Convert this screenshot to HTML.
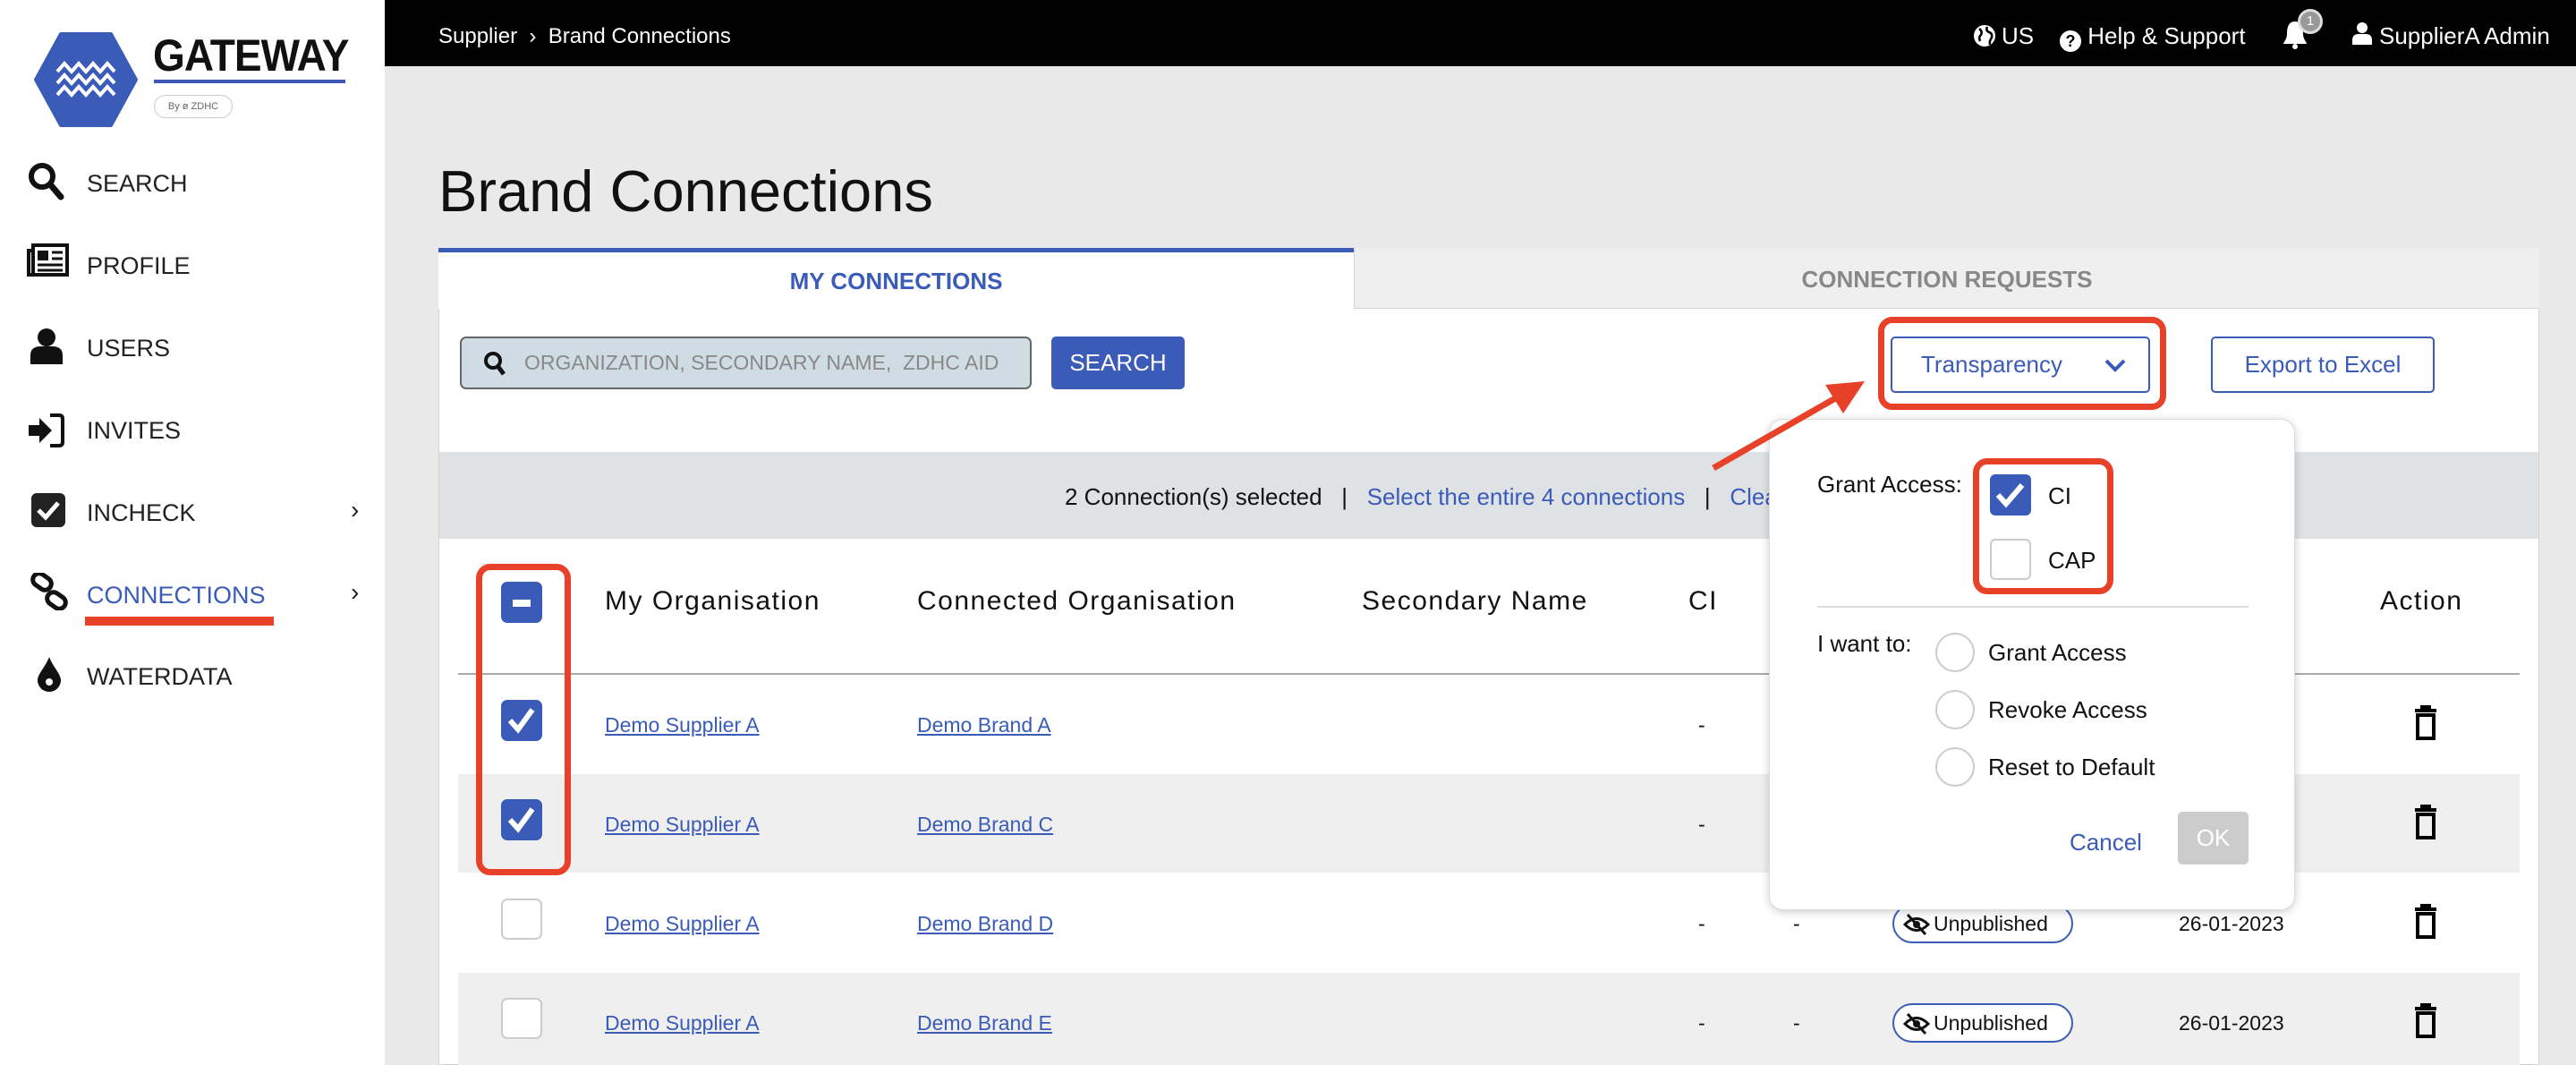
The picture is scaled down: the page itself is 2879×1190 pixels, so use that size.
<!DOCTYPE html>
<html><head><meta charset="utf-8"><style>
*{margin:0;padding:0;box-sizing:border-box}
body{width:2879px;height:1190px;overflow:hidden;background:#e9e9e9;font-family:"Liberation Sans",Arial,sans-serif;position:relative;color:#111}
.a{position:absolute}
#side{left:0;top:0;width:430px;height:1190px;background:#fff}
.nav{position:absolute;left:97px;font-size:27px;color:#222;line-height:1}
.ico{position:absolute;left:30px}
.chev{position:absolute;left:392px;font-size:28px;color:#222}
#top{left:430px;top:0;width:2449px;height:74px;background:#000;color:#fff;font-size:24px}
.card{left:490px;top:277px;width:2348px;height:913px;background:#fff;border:1px solid #d4d4d4}
.hd{position:absolute;top:655px;font-size:30px;letter-spacing:1.5px;color:#111}
.lk{position:absolute;font-size:23px;color:#3a5bb8;text-decoration:underline}
.cb{position:absolute;width:46px;height:46px;border-radius:7px;border:2px solid #ccc;background:#fff}
.cbc{background:#3a5bb8;border-color:#3a5bb8}
.dash{position:absolute;font-size:23px}
.pill{position:absolute;left:2115px;width:202px;height:44px;border:2px solid #3a5bb8;border-radius:22px;background:#fff;font-size:23px;line-height:40px;padding-left:44px}
.date{position:absolute;left:2435px;font-size:23px}
.radio{position:absolute;left:2163px;width:44px;height:44px;border:2px solid #ccc;border-radius:50%}
.pt{position:absolute;font-size:26px;color:#111}
</style></head><body>
<div id="side" class="a">
  <svg class="a" style="left:38px;top:36px" width="116" height="106" viewBox="0 0 116 106"><polygon points="30,2 86,2 114,53 86,104 30,104 2,53" fill="#3a5bb8" stroke="#3a5bb8" stroke-width="4" stroke-linejoin="round"/>
  <g fill="none" stroke="#fff" stroke-width="4"><path d="M26,44 l8,-9 8,9 8,-9 8,9 8,-9 8,9 8,-9 8,9"/><path d="M26,57 l8,-9 8,9 8,-9 8,9 8,-9 8,9 8,-9 8,9"/><path d="M26,70 l8,-9 8,9 8,-9 8,9 8,-9 8,9 8,-9 8,9"/></g></svg>
  <div class="a" style="left:171px;top:33px;font-size:50px;font-weight:bold;letter-spacing:-1px;transform:scaleX(0.92);transform-origin:left">GATEWAY</div>
  <div class="a" style="left:172px;top:89px;width:214px;height:4px;background:#3a5bb8"></div>
  <div class="a" style="left:172px;top:106px;width:88px;height:26px;border:1px solid #ccc;border-radius:13px;font-size:11px;color:#666;text-align:center;line-height:24px">By ø ZDHC</div>
  <svg class="ico" style="top:180px" width="44" height="44" viewBox="0 0 44 44"><circle cx="17" cy="17" r="12" fill="none" stroke="#111" stroke-width="6"/><path d="M26,26 L38,40" stroke="#111" stroke-width="7" stroke-linecap="round"/></svg>
  <div class="nav" style="top:192px">SEARCH</div>
  <svg class="ico" style="top:272px" width="48" height="38" viewBox="0 0 48 38"><rect x="7" y="2" width="38" height="33" fill="none" stroke="#111" stroke-width="4"/><path d="M7,8 H2 V35 H7" fill="none" stroke="#111" stroke-width="4"/><rect x="12" y="8" width="12" height="11" fill="#111"/><path d="M28,10H40M28,17H40M12,24H40M12,30H40" stroke="#111" stroke-width="3"/></svg>
  <div class="nav" style="top:284px">PROFILE</div>
  <svg class="ico" style="top:365px" width="44" height="44" viewBox="0 0 44 44"><circle cx="22" cy="12" r="10" fill="#111"/><path d="M4,42 V32 Q4,22 16,22 H28 Q40,22 40,32 V42Z" fill="#111"/></svg>
  <div class="nav" style="top:376px">USERS</div>
  <svg class="ico" style="top:461px" width="44" height="40" viewBox="0 0 44 40"><path d="M2,14 H14 V6 L28,20 L14,34 V26 H2Z" fill="#111"/><path d="M26,3 H36 Q40,3 40,7 V33 Q40,37 36,37 H26" fill="none" stroke="#111" stroke-width="4"/></svg>
  <div class="nav" style="top:468px">INVITES</div>
  <svg class="ico" style="top:550px;left:34px" width="40" height="40" viewBox="0 0 40 40"><rect x="1" y="1" width="38" height="38" rx="6" fill="#222"/><path d="M9,20 L17,28 L31,12" fill="none" stroke="#fff" stroke-width="5"/></svg>
  <div class="nav" style="top:560px">INCHECK</div>
  <div class="chev" style="top:554px">›</div>
  <svg class="ico" style="top:640px;left:33px" width="44" height="42" viewBox="0 0 44 42"><g fill="none" stroke="#111" stroke-width="5"><rect x="3" y="3" width="22" height="14" rx="7" transform="rotate(35 14 10)"/><rect x="19" y="24" width="22" height="14" rx="7" transform="rotate(35 30 31)"/></g></svg>
  <div class="nav" style="top:652px;color:#3a5bb8">CONNECTIONS</div>
  <div class="chev" style="top:646px">›</div>
  <div class="a" style="left:95px;top:689px;width:211px;height:10px;background:#e8412a"></div>
  <svg class="ico" style="top:733px;left:40px" width="30" height="40" viewBox="0 0 30 40"><path d="M15,1 C19,12 28,20 28,27 A13,13 0 0 1 2,27 C2,20 11,12 15,1Z" fill="#111"/><circle cx="15" cy="29" r="4" fill="#fff"/></svg>
  <div class="nav" style="top:743px">WATERDATA</div>
</div>

<div id="top" class="a">
  <div class="a" style="left:60px;top:27px">Supplier&nbsp; ›&nbsp; Brand Connections</div>
  <svg class="a" style="left:1775px;top:27px" width="26" height="26" viewBox="0 0 26 26"><circle cx="13" cy="13" r="12" fill="#fff"/><path d="M7,5 Q11,8 9,12 Q6,14 8,19 M16,3 Q14,7 18,9 Q22,10 21,15 Q18,19 19,23" fill="none" stroke="#000" stroke-width="2.5"/></svg>
  <div class="a" style="left:1807px;top:25px;font-size:26px">US</div>
  <div class="a" style="left:1872px;top:25px;font-size:26px"><span style="display:inline-block;width:24px;height:24px;border-radius:50%;background:#fff;color:#000;font-size:18px;text-align:center;line-height:24px;font-weight:bold;vertical-align:-3px">?</span> Help &amp; Support</div>
  <svg class="a" style="left:2120px;top:22px" width="30" height="34" viewBox="0 0 30 34"><path d="M15,2 C7,2 6,10 6,16 C6,22 2,25 2,27 H28 C28,25 24,22 24,16 C24,10 23,2 15,2Z" fill="#fff"/><circle cx="15" cy="30" r="3" fill="#fff"/></svg>
  <div class="a" style="left:2138px;top:10px;width:28px;height:28px;border-radius:50%;background:#999;border:3px solid #ddd;color:#fff;font-size:15px;text-align:center;line-height:22px">1</div>
  <svg class="a" style="left:2198px;top:24px" width="24" height="26" viewBox="0 0 24 26"><circle cx="12" cy="7" r="6" fill="#fff"/><path d="M1,26 V21 Q1,14 8,14 H16 Q23,14 23,21 V26Z" fill="#fff"/></svg>
  <div class="a" style="left:2229px;top:25px;font-size:26px">SupplierA Admin</div>
</div>

<div class="a" style="left:490px;top:176px;font-size:65px;color:#111">Brand Connections</div>

<div class="a card"></div>
<div class="a" style="left:490px;top:277px;width:1023px;height:68px;background:#fff;border-top:5px solid #3a5bb8;color:#3a5bb8;font-weight:bold;font-size:26px;text-align:center;line-height:64px">MY CONNECTIONS</div>
<div class="a" style="left:1513px;top:277px;width:1325px;height:68px;background:#efefef;border-bottom:1px solid #d4d4d4;border-left:1px solid #d4d4d4;color:#888;font-weight:bold;font-size:26px;text-align:center;line-height:70px">CONNECTION REQUESTS</div>

<div class="a" style="left:514px;top:376px;width:639px;height:59px;background:#d0dce4;border:2px solid #666;border-radius:7px"></div>
<svg class="a" style="left:540px;top:392px" width="26" height="28" viewBox="0 0 26 28"><circle cx="11" cy="11" r="8" fill="none" stroke="#111" stroke-width="4"/><path d="M17,18 L23,26" stroke="#111" stroke-width="5"/></svg>
<div class="a" style="left:586px;top:392px;font-size:23px;color:#888">ORGANIZATION, SECONDARY NAME,&nbsp; ZDHC AID</div>
<div class="a" style="left:1175px;top:376px;width:149px;height:59px;background:#3a5bb8;border-radius:5px;color:#fff;font-size:26px;text-align:center;line-height:59px">SEARCH</div>

<div class="a" style="left:2099px;top:354px;width:322px;height:104px;border:7px solid #e8412a;border-radius:16px"></div>
<div class="a" style="left:2113px;top:376px;width:290px;height:63px;border:2px solid #3a5bb8;border-radius:5px;color:#3a5bb8;font-size:26px;line-height:59px;padding-left:32px">Transparency</div>
<svg class="a" style="left:2350px;top:398px" width="28" height="20" viewBox="0 0 28 20"><path d="M4,5 L14,15 L24,5" fill="none" stroke="#3a5bb8" stroke-width="4"/></svg>
<div class="a" style="left:2471px;top:376px;width:250px;height:63px;border:2px solid #3a5bb8;border-radius:5px;color:#3a5bb8;font-size:26px;line-height:59px;text-align:center">Export to Excel</div>

<div class="a" style="left:491px;top:505px;width:2346px;height:97px;background:#dfe2e5"></div>
<div class="a" style="left:1190px;top:540px;font-size:26px;white-space:nowrap">2 Connection(s) selected &nbsp;&nbsp;|&nbsp;&nbsp; <span style="color:#3a5bb8">Select the entire 4 connections</span> &nbsp;&nbsp;|&nbsp;&nbsp; <span style="color:#3a5bb8">Clear selection</span></div>

<div class="a" style="left:512px;top:752px;width:2304px;height:2px;background:#aaa"></div>
<div class="hd" style="left:676px">My Organisation</div>
<div class="hd" style="left:1025px">Connected Organisation</div>
<div class="hd" style="left:1522px">Secondary Name</div>
<div class="hd" style="left:1887px">CI</div>
<div class="hd" style="left:2420px">Published</div>
<div class="hd" style="left:2660px">Action</div>
<div class="cb cbc" style="left:560px;top:650px"><div style="position:absolute;left:11px;top:18px;width:20px;height:8px;background:#fff"></div></div>

<div class="a" style="left:512px;top:865px;width:2304px;height:110px;background:#efefef"></div>
<div class="a" style="left:512px;top:1087px;width:2304px;height:103px;background:#efefef"></div>

<div class="cb cbc" style="left:560px;top:782px"><svg width="42" height="42" viewBox="0 0 42 42"><path d="M8,21 L17,31 L33,9" fill="none" stroke="#fff" stroke-width="6"/></svg></div>
<div class="cb cbc" style="left:560px;top:893px"><svg width="42" height="42" viewBox="0 0 42 42"><path d="M8,21 L17,31 L33,9" fill="none" stroke="#fff" stroke-width="6"/></svg></div>
<div class="cb" style="left:560px;top:1004px"></div>
<div class="cb" style="left:560px;top:1115px"></div>
<div class="lk" style="left:676px;top:797px">Demo Supplier A</div><div class="lk" style="left:1025px;top:797px">Demo Brand A</div>
<div class="lk" style="left:676px;top:908px">Demo Supplier A</div><div class="lk" style="left:1025px;top:908px">Demo Brand C</div>
<div class="lk" style="left:676px;top:1019px">Demo Supplier A</div><div class="lk" style="left:1025px;top:1019px">Demo Brand D</div>
<div class="lk" style="left:676px;top:1130px">Demo Supplier A</div><div class="lk" style="left:1025px;top:1130px">Demo Brand E</div>
<div class="dash" style="left:1898px;top:797px">-</div><div class="dash" style="left:1898px;top:908px">-</div>
<div class="dash" style="left:1898px;top:1019px">-</div><div class="dash" style="left:2004px;top:1019px">-</div>
<div class="dash" style="left:1898px;top:1130px">-</div><div class="dash" style="left:2004px;top:1130px">-</div>
<div class="pill" style="top:1010px">Unpublished<svg style="position:absolute;left:10px;top:8px" width="30" height="26" viewBox="0 0 30 26"><path d="M2,13 Q15,0 28,13 Q15,26 2,13Z" fill="none" stroke="#111" stroke-width="3"/><circle cx="15" cy="13" r="4" fill="#111"/><path d="M5,2 L25,24" stroke="#111" stroke-width="3"/></svg></div>
<div class="pill" style="top:1121px">Unpublished<svg style="position:absolute;left:10px;top:8px" width="30" height="26" viewBox="0 0 30 26"><path d="M2,13 Q15,0 28,13 Q15,26 2,13Z" fill="none" stroke="#111" stroke-width="3"/><circle cx="15" cy="13" r="4" fill="#111"/><path d="M5,2 L25,24" stroke="#111" stroke-width="3"/></svg></div>
<div class="date" style="top:1019px">26-01-2023</div>
<div class="date" style="top:1130px">26-01-2023</div>
<svg class="a" style="left:2697px;top:788px" width="28" height="40" viewBox="0 0 28 40"><path d="M2,6 H26 M10,6 V2 H18 V6" stroke="#000" stroke-width="4" fill="none"/><rect x="5" y="11" width="18" height="26" fill="none" stroke="#000" stroke-width="4"/></svg>
<svg class="a" style="left:2697px;top:899px" width="28" height="40" viewBox="0 0 28 40"><path d="M2,6 H26 M10,6 V2 H18 V6" stroke="#000" stroke-width="4" fill="none"/><rect x="5" y="11" width="18" height="26" fill="none" stroke="#000" stroke-width="4"/></svg>
<svg class="a" style="left:2697px;top:1010px" width="28" height="40" viewBox="0 0 28 40"><path d="M2,6 H26 M10,6 V2 H18 V6" stroke="#000" stroke-width="4" fill="none"/><rect x="5" y="11" width="18" height="26" fill="none" stroke="#000" stroke-width="4"/></svg>
<svg class="a" style="left:2697px;top:1121px" width="28" height="40" viewBox="0 0 28 40"><path d="M2,6 H26 M10,6 V2 H18 V6" stroke="#000" stroke-width="4" fill="none"/><rect x="5" y="11" width="18" height="26" fill="none" stroke="#000" stroke-width="4"/></svg>

<div class="a" style="left:532px;top:630px;width:106px;height:348px;border:7px solid #e8412a;border-radius:16px"></div>

<div class="a" style="left:1977px;top:468px;width:588px;height:549px;background:#fff;border-radius:16px;box-shadow:0 2px 10px rgba(0,0,0,0.2);border:1px solid #ddd"></div>
<div class="pt" style="left:2031px;top:526px">Grant Access:</div>
<div class="cb cbc" style="left:2224px;top:530px;border-radius:6px"><svg width="42" height="42" viewBox="0 0 42 42"><path d="M7,21 L16,31 L34,10" fill="none" stroke="#fff" stroke-width="6"/></svg></div>
<div class="pt" style="left:2289px;top:539px">CI</div>
<div class="cb" style="left:2224px;top:602px;border-radius:6px"></div>
<div class="pt" style="left:2289px;top:611px">CAP</div>
<div class="a" style="left:2205px;top:512px;width:157px;height:152px;border:7px solid #e8412a;border-radius:16px"></div>
<div class="a" style="left:2031px;top:677px;width:482px;height:2px;background:#ddd"></div>
<div class="pt" style="left:2031px;top:704px">I want to:</div>
<div class="radio" style="top:707px"></div><div class="pt" style="left:2222px;top:714px">Grant Access</div>
<div class="radio" style="top:771px"></div><div class="pt" style="left:2222px;top:778px">Revoke Access</div>
<div class="radio" style="top:835px"></div><div class="pt" style="left:2222px;top:842px">Reset to Default</div>
<div class="pt" style="left:2313px;top:926px;color:#3a5bb8">Cancel</div>
<div class="a" style="left:2434px;top:907px;width:79px;height:59px;background:#ccc;border-radius:5px;color:#fff;font-size:26px;text-align:center;line-height:59px">OK</div>

<svg class="a" style="left:1900px;top:400px" width="200" height="140" viewBox="0 0 200 140"><path d="M15,123 L160,40" stroke="#e8412a" stroke-width="7"/><polygon points="184,26 140,30 160,62" fill="#e8412a"/></svg>
</body></html>
